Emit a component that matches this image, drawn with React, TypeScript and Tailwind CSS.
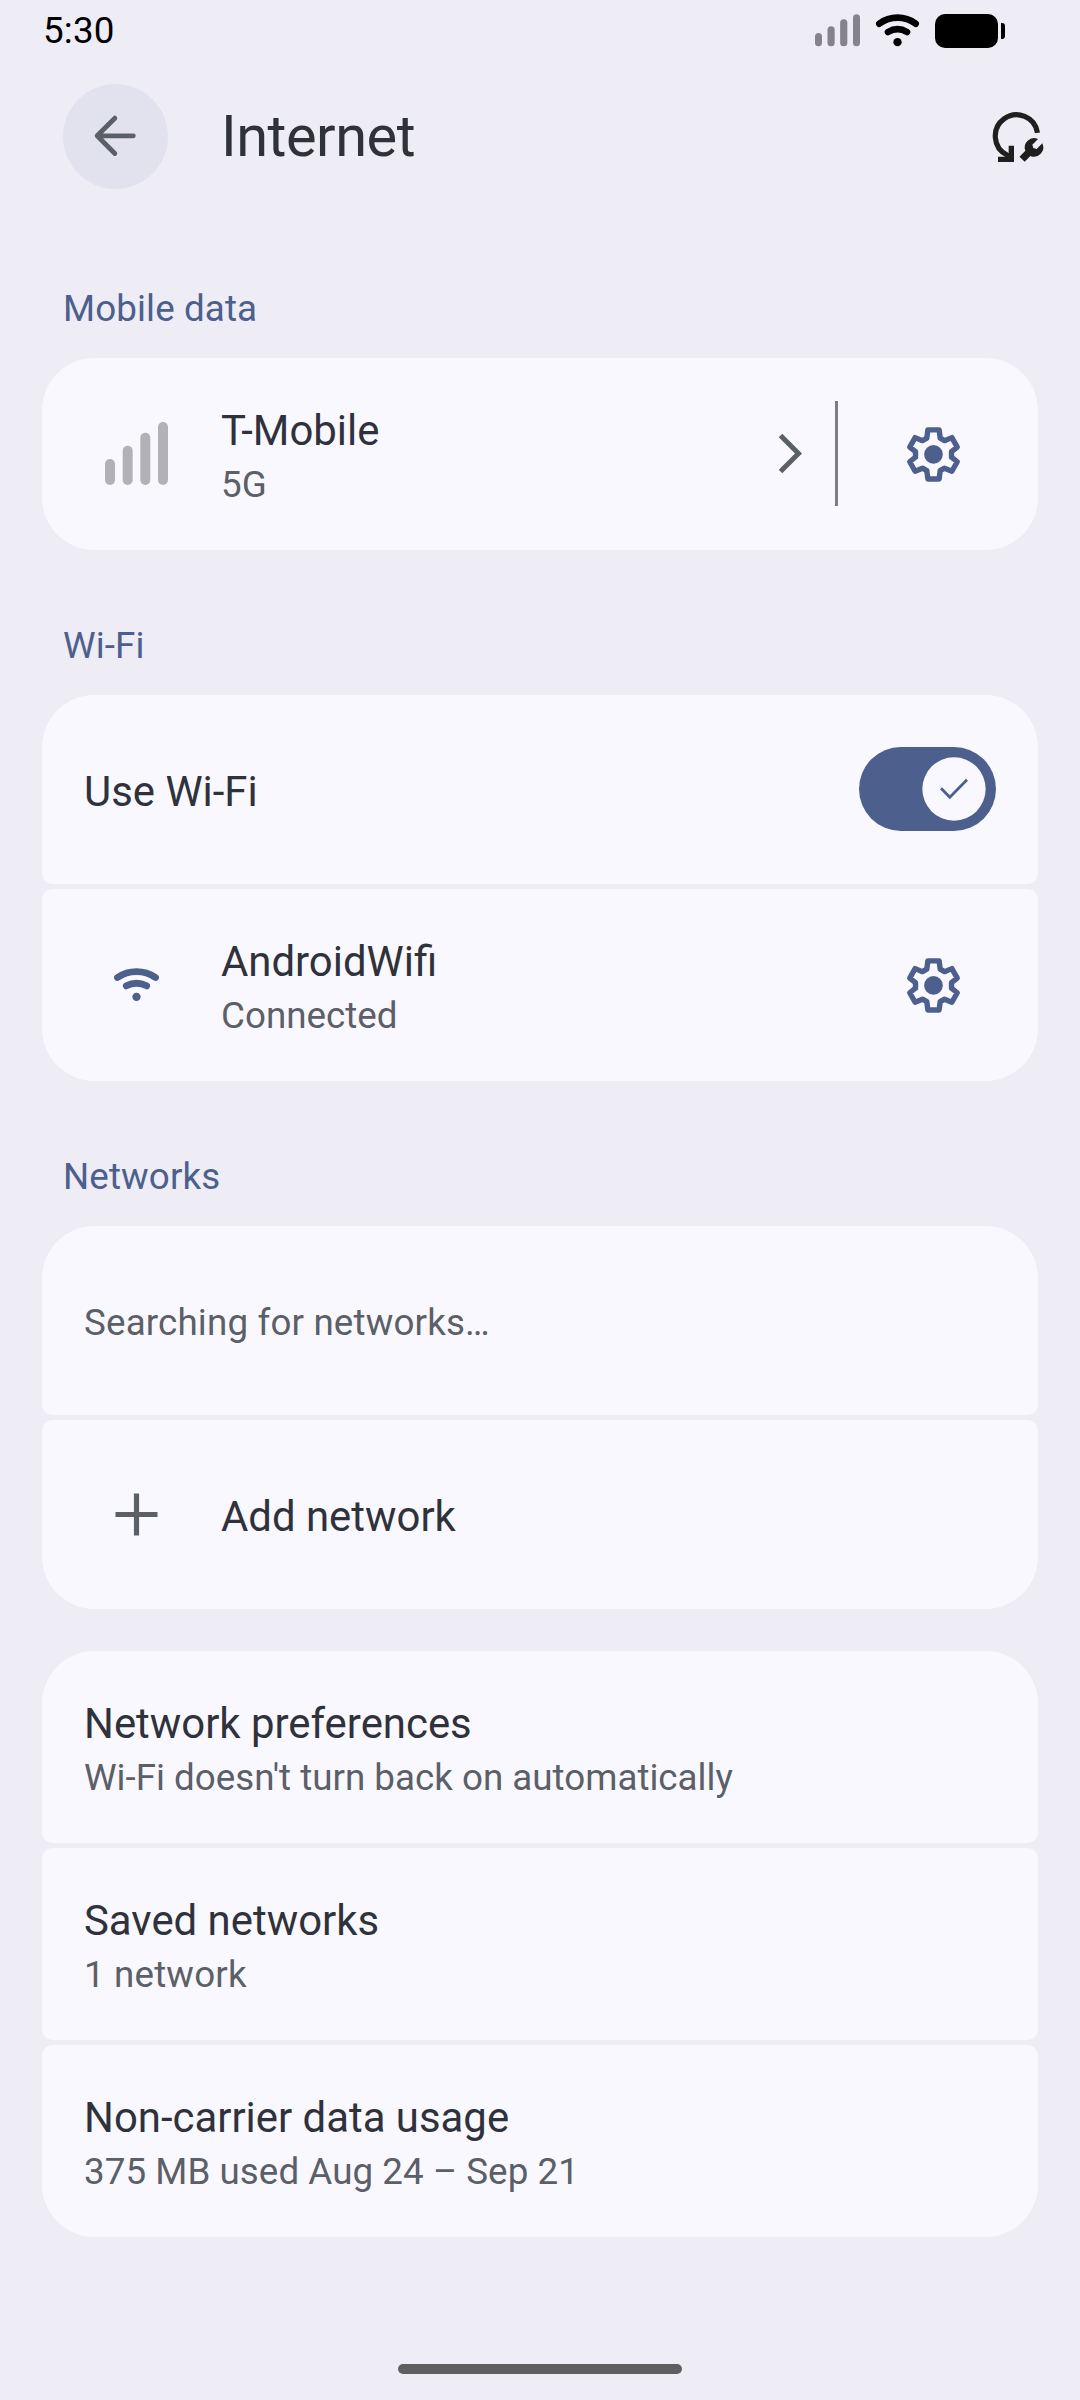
import type { ReactNode } from "react";

function SignalBars() {
  return (
    <svg className="h-[33px] w-[45px]" viewBox="105 44 135 99" fill="#858389">
      <rect x="105" y="101" width="21" height="40" rx="10.5" />
      <rect x="142.5" y="81" width="21.5" height="60" rx="10.5" />
      <rect x="180.5" y="60" width="21.5" height="81" rx="10.5" />
      <rect x="219" y="45" width="21" height="96" rx="10.5" />
    </svg>
  );
}

function StatusWifi() {
  return (
    <svg className="h-[33px] w-[45px]" viewBox="285 44 135 99" fill="none" stroke="#000" strokeWidth="20" strokeLinecap="round">
      <path d="M298 73A92 92 0 0 1 407 73" />
      <path d="M324 98A56 56 0 0 1 381 98" />
      <circle cx="352.5" cy="128.5" r="12.5" fill="#000" stroke="none" />
    </svg>
  );
}

function Battery() {
  return (
    <div className="flex items-center gap-[3px]">
      <div className="h-[34px] w-[63px] rounded-[10px] bg-black" />
      <div className="h-4 w-1 rounded-r-[3px] bg-black" />
    </div>
  );
}

function BackArrow() {
  return (
    <svg className="size-[63px]" viewBox="251.5 315.5 189 189" fill="none" stroke="#5b5f68" strokeWidth="14.5" strokeLinecap="round" strokeLinejoin="round">
      <path d="M344 355L291 408L344 461M291 408H399.5" />
    </svg>
  );
}

function ResetWrench() {
  return (
    <svg className="h-[60px] w-[60px]" viewBox="624 321 180 180">
      <path d="M772.5 398.5A63.7 63.7 0 1 0 681 465L694 478" fill="none" stroke="#1f1f1f" strokeWidth="15.5" />
      <path d="M654 470H686V437.5H702V486H654Z" fill="#1f1f1f" />
      <path
        d="M774 417L757 434L760 444L770 447L787 430A28 28 0 0 1 751 468L734 485.500L718.500 470L736 452.500A28 28 0 0 1 774 417Z"
        fill="#1f1f1f"
      />
    </svg>
  );
}

function MobileSignal() {
  return (
    <svg className="size-[63px]" viewBox="195 456 189 189" fill="#b3b1b8">
      <rect x="195" y="567" width="30" height="78" rx="15" />
      <rect x="248" y="527" width="30" height="118" rx="15" />
      <rect x="301" y="488" width="30" height="157" rx="15" />
      <rect x="354" y="456" width="30" height="189" rx="15" />
    </svg>
  );
}

function WifiIcon() {
  return (
    <svg className="size-[63px]" viewBox="195 249 189 189" fill="none" stroke="#4d5f8c" strokeWidth="20.5" strokeLinecap="round">
      <path d="M232.500 322.500A101 101 0 0 1 346.500 322.500" />
      <path d="M259 347.500A66 66 0 0 1 320 347.500" />
      <circle cx="289.500" cy="380.500" r="12.500" fill="#4d5f8c" stroke="none" />
    </svg>
  );
}

function PlusIcon() {
  return (
    <svg className="size-[63px]" viewBox="0 0 63 63" stroke="#5b5f68" strokeWidth="5.2">
      <path d="M10.500 31.500H52.500M31.500 10.500V52.500" />
    </svg>
  );
}

function Chevron() {
  return (
    <svg className="h-[63px] w-[24px]" viewBox="0 0 24 63" fill="none" stroke="#5b5f68" strokeWidth="5">
      <path d="M1.500 13.500L19.500 31.500L1.500 49.500" />
    </svg>
  );
}

function Gear() {
  return (
    <svg className="size-[63px]" viewBox="-12 -12.350 24 24" fill="none" stroke="#4d5f8c" strokeWidth="2.050" strokeLinejoin="round">
      <path d="M-2.150 -9.350H2.150L2.550 -6.200L4.200 -5.250L7 -6.400L9.050 -2.800L6.850 -1.050V1.050L9.050 2.800L7 6.400L4.200 5.250L2.550 6.200L2.150 9.350H-2.150L-2.550 6.200L-4.200 5.250L-7 6.400L-9.050 2.800L-6.850 1.050V-1.050L-9.050 -2.800L-7 -6.400L-4.200 -5.250L-2.550 -6.200Z" />
      <circle r="3.550" fill="#4d5f8c" stroke="none" />
    </svg>
  );
}

function Toggle() {
  return (
    <div className="mb-px flex h-[84px] w-[137px] items-center justify-end rounded-full bg-[#4d5f8c] pr-[10px]">
      <svg className="size-[64px]" viewBox="306 201 192 192" fill="none">
        <circle cx="402" cy="297" r="95" fill="#faf8ff" />
        <path d="M363 294.500L389.500 321.500L441 269.500" stroke="#4d5f8c" strokeWidth="8.500" />
      </svg>
    </div>
  );
}

function SectionLabel({ children }: { children: ReactNode }) {
  return (
    <h2 className="h-[50px] pl-[21px] text-[36.75px] leading-[52px] tracking-[0.12px] text-[#4d5f8c]">{children}</h2>
  );
}

function Group({ children }: { children: ReactNode }) {
  return <section className="flex flex-col gap-[5px] overflow-hidden rounded-[52.5px]">{children}</section>;
}

type RowProps = {
  title?: string;
  summary?: string;
  summaryTracking?: string;
  icon?: ReactNode;
  trailing?: ReactNode;
};

function Row({ title, summary, summaryTracking = "", icon, trailing }: RowProps) {
  const double = Boolean(title && summary);
  return (
    <div
      className={`flex items-center rounded-[10.5px] bg-[#faf8ff] pr-[42px] ${double ? "h-[192px] pb-px" : "h-[189px]"} ${
        icon ? "gap-[53px] pl-[63px]" : "pl-[42px]"
      }`}
    >
      {icon}
      <div className={`min-w-0 flex-1 ${double ? "pt-[6px]" : "pt-[4px]"}`}>
        {title && <div className="text-[41.9px] leading-[56px] text-[#2f323b]">{title}</div>}
        {summary && (
          <div className={`text-[36.75px] leading-[52px] text-[#5b5f68] ${summaryTracking}`}>{summary}</div>
        )}
      </div>
      {trailing}
    </div>
  );
}

export default function App() {
  return (
    <div className="flex h-[2400px] w-[1080px] flex-col bg-[#eeecf5] font-[Roboto,sans-serif]">
      <div className="flex h-[63px] items-start justify-between pr-[75px] pl-[43px]">
        <span className="pt-[5px] text-[36.75px] leading-[52px] tracking-[0.2px] text-black">5:30</span>
        <div className="flex items-start pt-[14px]">
          <SignalBars />
          <div className="ml-[15px]">
            <StatusWifi />
          </div>
          <div className="ml-[15px]">
            <Battery />
          </div>
        </div>
      </div>

      <header className="mt-[21px] flex h-[105px] items-center pr-[32px] pl-[63px]">
        <button className="flex size-[105px] items-center justify-center rounded-full bg-[#e2e2ee]">
          <BackArrow />
        </button>
        <h1 className="ml-[53px] flex-1 pb-[2px] text-[57.75px] leading-[72px] tracking-[-0.5px] text-[#2f323b]">
          Internet
        </h1>
        <ResetWrench />
      </header>

      <main className="flex flex-col px-[42px] pt-[94px]">
        <SectionLabel>Mobile data</SectionLabel>
        <div className="mt-[25px]">
          <Group>
            <Row
              title="T-Mobile"
              summary="5G"
              icon={<MobileSignal />}
              trailing={
                <div className="flex items-center pr-[31px]">
                  <Chevron />
                  <div className="ml-[32px] h-[105px] w-[3px] bg-[#7b7d87]" />
                  <div className="ml-[64px]">
                    <Gear />
                  </div>
                </div>
              }
            />
          </Group>
        </div>

        <div className="mt-[70px]">
          <SectionLabel>Wi-Fi</SectionLabel>
        </div>
        <div className="mt-[25px]">
          <Group>
            <Row title="Use Wi-Fi" trailing={<Toggle />} />
            <Row
              title="AndroidWifi"
              summary="Connected"
              icon={<WifiIcon />}
              trailing={
                <div className="pr-[31px]">
                  <Gear />
                </div>
              }
            />
          </Group>
        </div>

        <div className="mt-[70px]">
          <SectionLabel>Networks</SectionLabel>
        </div>
        <div className="mt-[25px]">
          <Group>
            <Row summary="Searching for networks…" summaryTracking="tracking-[0.16px]" />
            <Row title="Add network" icon={<PlusIcon />} />
          </Group>
        </div>

        <div className="mt-[42px]">
          <Group>
            <Row title="Network preferences" summary="Wi-Fi doesn't turn back on automatically" />
            <Row title="Saved networks" summary="1 network" summaryTracking="tracking-[0.16px]" />
            <Row
              title="Non-carrier data usage"
              summary="375 MB used Aug 24 – Sep 21"
              summaryTracking="tracking-[0.05px]"
            />
          </Group>
        </div>
      </main>

      <div className="mt-auto mb-[26px] h-[10px] w-[284px] self-center rounded-full bg-[#5f5f61]" />
    </div>
  );
}
